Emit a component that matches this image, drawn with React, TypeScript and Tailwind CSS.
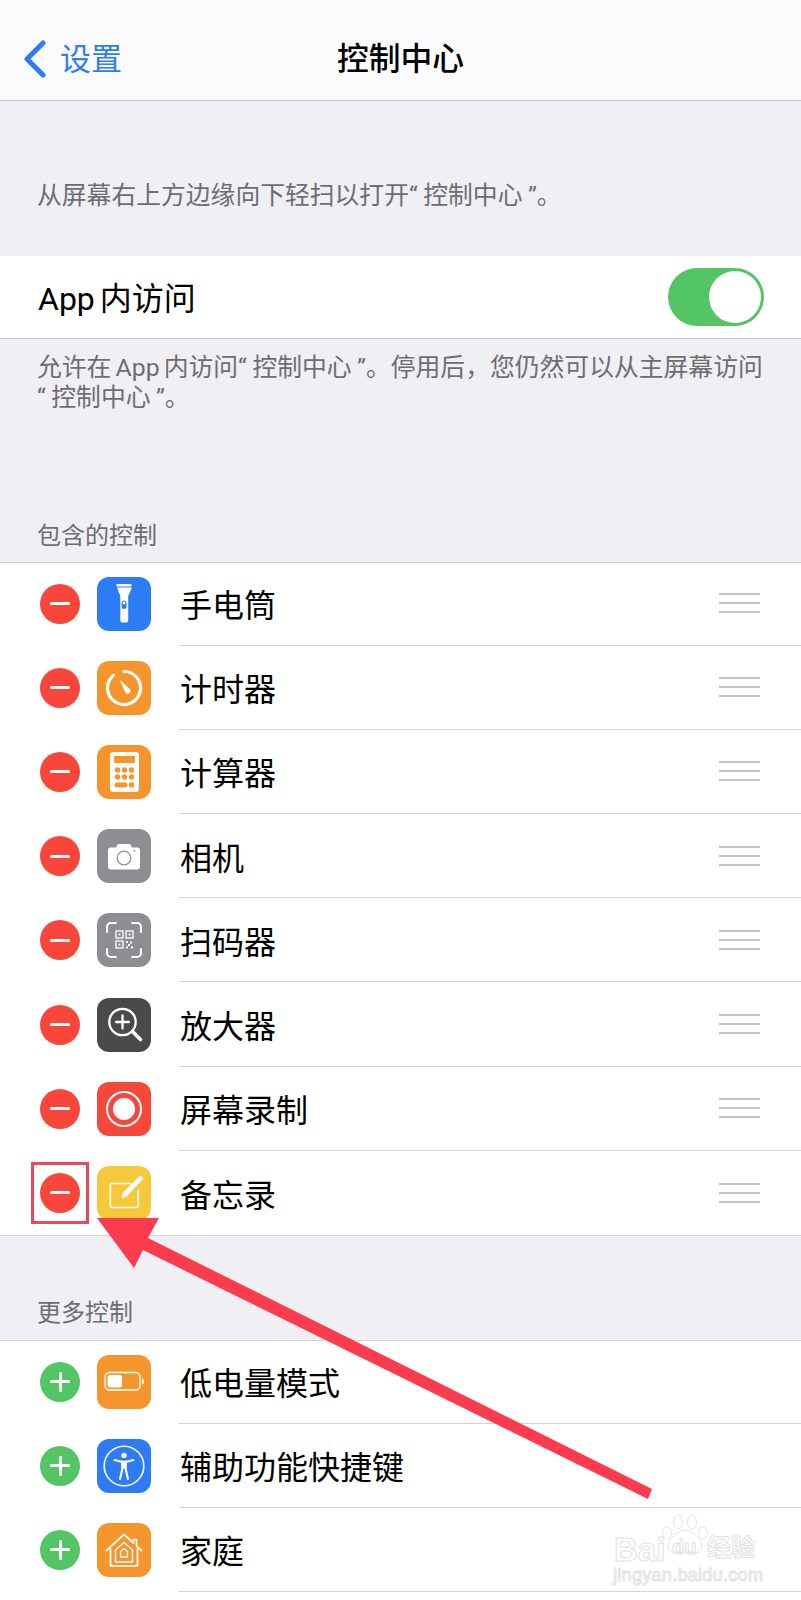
import type { ReactNode } from "react";

const orange = "#f6952b";
const blue = "#2e7bf6";
const grey = "#8e8e92";

function Glyph({ bg, children }: { bg: string; children: ReactNode }) {
  return (
    <svg viewBox="0 0 54 54" className="h-[54px] w-[54px] shrink-0">
      <rect width="54" height="54" rx="12" fill={bg} />
      {children}
    </svg>
  );
}

const FlashlightIcon = () => (
  <Glyph bg={blue}>
    <rect x="19.5" y="7" width="15" height="2.4" rx="0.6" fill="#fff" />
    <path d="M20 10.5h14.4v1.6l-3.2 7V43.5a2 2 0 0 1-2 2h-3.9a2 2 0 0 1-2-2V19z" fill="#fff" />
    <rect x="24.6" y="23.5" width="5" height="8.5" rx="2.5" fill={blue} />
    <circle cx="27.1" cy="26" r="1.4" fill="#fff" />
  </Glyph>
);

const TimerIcon = () => (
  <Glyph bg={orange}>
    <path d="M27 10.5a16.5 16.5 0 1 1-10.5 3.8" fill="none" stroke="#fff" strokeWidth="3.2" strokeLinecap="round" />
    <path d="M22.5 18.5l9.600 9a2.800 2.800 0 1 1-4 3.400z" fill="#fff" />
  </Glyph>
);

const CalculatorIcon = () => (
  <Glyph bg={orange}>
    <rect x="13" y="7" width="29" height="40" rx="3.5" fill="#fff" />
    <rect x="17" y="11" width="21" height="7" rx="1" fill={orange} />
    {[20.5, 27.5, 34.5].flatMap((x) =>
      [25, 32].map((y) => <circle key={`${x}-${y}`} cx={x} cy={y} r="2.7" fill={orange} />),
    )}
    <rect x="17.5" y="37.5" width="13" height="5" rx="2.5" fill={orange} />
    <circle cx="34.5" cy="40" r="2.7" fill={orange} />
  </Glyph>
);

const CameraIcon = () => (
  <Glyph bg={grey}>
    <path d="M14 18.5h5l1.8-3.5h12.4l1.8 3.5h5a3 3 0 0 1 3 3v16a3 3 0 0 1-3 3H14a3 3 0 0 1-3-3v-16a3 3 0 0 1 3-3z" fill="#fff" />
    <circle cx="27" cy="29" r="6.8" fill="none" stroke={grey} strokeWidth="1.2" />
    <circle cx="37.5" cy="21.8" r="0.9" fill={grey} />
  </Glyph>
);

const QrIcon = () => (
  <Glyph bg={grey}>
    <path
      d="M10 19v-5a4 4 0 0 1 4-4h5M35 10h5a4 4 0 0 1 4 4v5M44 36v4a4 4 0 0 1-4 4h-5M19 44h-5a4 4 0 0 1-4-4v-4"
      fill="none"
      stroke="#fff"
      strokeWidth="2"
      strokeLinecap="round"
    />
    <g fill="none" stroke="#fff" strokeWidth="1.3">
      <rect x="19" y="18" width="7" height="7" />
      <rect x="29" y="18" width="7" height="7" />
      <rect x="19" y="28" width="7" height="7" />
    </g>
    <g fill="#fff">
      <rect x="21.6" y="20.6" width="1.8" height="1.8" />
      <rect x="31.6" y="20.6" width="1.8" height="1.8" />
      <rect x="21.6" y="30.6" width="1.8" height="1.8" />
      <rect x="29" y="28" width="2" height="2" />
      <rect x="33" y="28.6" width="2" height="2" />
      <rect x="31" y="31" width="2" height="2" />
      <rect x="29" y="33.4" width="2" height="2" />
      <rect x="34" y="33.4" width="2" height="2" />
    </g>
  </Glyph>
);

const MagnifierIcon = () => (
  <Glyph bg="#4a4a4c">
    <circle cx="25.5" cy="24" r="13.2" fill="none" stroke="#fff" strokeWidth="2.3" />
    <path d="M25.5 17.5v13M19 24h13" stroke="#fff" strokeWidth="2.3" strokeLinecap="round" />
    <path d="M35.5 33.5l8 8" stroke="#fff" strokeWidth="3.6" strokeLinecap="round" />
  </Glyph>
);

const RecordIcon = () => (
  <Glyph bg="#f6483a">
    <circle cx="27" cy="27" r="17" fill="none" stroke="#fff" strokeWidth="2" />
    <circle cx="27" cy="27" r="11" fill="#fff" />
  </Glyph>
);

const NotesIcon = () => (
  <Glyph bg="#f6c93d">
    <path d="M34 17.500H15a1.700 1.700 0 0 0-1.700 1.700v20.600a1.700 1.700 0 0 0 1.700 1.700h24.500a1.700 1.700 0 0 0 1.700-1.700V24" fill="none" stroke="#fff" strokeWidth="1.500" />
    <path d="M24.500 32.500l1.500-6L42 10.700a2.200 2.200 0 0 1 3.200 0 2.200 2.200 0 0 1 0 3.200L29.500 30.500z" fill="#fff" />
  </Glyph>
);

const BatteryIcon = () => (
  <Glyph bg={orange}>
    <rect x="8" y="17.5" width="35" height="17.5" rx="4.5" fill="none" stroke="#fff" strokeWidth="1.4" />
    <rect x="10.5" y="20" width="14.5" height="12.5" rx="2.5" fill="#fff" />
    <path d="M45 23.5c1.500.5 2 1.500 2 3s-.5 2.500-2 3z" fill="#fff" />
  </Glyph>
);

const AccessibilityIcon = () => (
  <Glyph bg={blue}>
    <circle cx="27" cy="27" r="19.800" fill="none" stroke="#fff" strokeWidth="1.600" />
    <circle cx="27" cy="16.400" r="2.700" fill="#fff" />
    <path d="M17.500 21l7 1.700h5l7-1.700" fill="none" stroke="#fff" strokeWidth="2" strokeLinecap="round" strokeLinejoin="round" />
    <path d="M25 22.500l.3 7.500-2.300 10M29 22.500l-.3 7.500 2.300 10" fill="none" stroke="#fff" strokeWidth="2.100" strokeLinecap="round" strokeLinejoin="round" />
    <rect x="25" y="22.500" width="4" height="7" fill="#fff" />
  </Glyph>
);

const HomeIcon = () => (
  <Glyph bg={orange}>
    <path d="M9.500 27.500L27 11.500l9.500 8.500v-3.500h3v6.500l5 4.500M13.500 26v17h27V26" fill="none" stroke="#fff" strokeWidth="1.700" strokeLinecap="round" strokeLinejoin="round" />
    <path d="M18.500 27L27 19.500l8.500 7.500v12h-17z" fill="none" stroke="#fff" strokeWidth="1.400" strokeLinejoin="round" />
    <path d="M23.500 28.500l3.500-3 3.500 3v5.500h-7z" fill="none" stroke="#fff" strokeWidth="1.300" strokeLinejoin="round" />
  </Glyph>
);

const included = [
  { name: "手电筒", icon: FlashlightIcon },
  { name: "计时器", icon: TimerIcon },
  { name: "计算器", icon: CalculatorIcon },
  { name: "相机", icon: CameraIcon },
  { name: "扫码器", icon: QrIcon },
  { name: "放大器", icon: MagnifierIcon },
  { name: "屏幕录制", icon: RecordIcon },
  { name: "备忘录", icon: NotesIcon },
];

const more = [
  { name: "低电量模式", icon: BatteryIcon },
  { name: "辅助功能快捷键", icon: AccessibilityIcon },
  { name: "家庭", icon: HomeIcon },
];

function ControlRow({ name, icon: Icon, added, last }: { name: string; icon: () => ReactNode; added?: boolean; last?: boolean }) {
  return (
    <div className="flex h-[84.2px] items-center pl-[40px]">
      <div className={`relative h-[40px] w-[40px] shrink-0 rounded-full ${added ? "bg-[#54c564]" : "bg-[#f8473a]"}`}>
        <div className="absolute left-[10px] top-[18.500px] h-[3px] w-[20px] rounded-full bg-white" />
        {added && <div className="absolute left-[18.500px] top-[10px] h-[20px] w-[3px] rounded-full bg-white" />}
      </div>
      <div className="ml-[17px]">
        <Icon />
      </div>
      <div className={`ml-[28px] flex h-full flex-1 items-center justify-between pl-[1px] pr-[41px] ${last ? "" : "border-b border-[#d2d2d6]"}`}>
        <span className="relative top-[3px] text-[32px] leading-none text-black">{name}</span>
        {!added && (
          <div className="flex w-[41px] flex-col gap-[7px]">
            <div className="h-[2px] bg-[#c4c4c8]" />
            <div className="h-[2px] bg-[#c4c4c8]" />
            <div className="h-[2px] bg-[#c4c4c8]" />
          </div>
        )}
      </div>
    </div>
  );
}

// quotes sit wider in the iOS font than in Roboto
function Quoted({ children }: { children: ReactNode }) {
  return (
    <>
      <span className="pr-[5.500px]">“</span>
      {children}
      <span className="pl-[5.500px]">”</span>
    </>
  );
}

function Watermark() {
  const outline = "text-transparent [-webkit-text-stroke:1px_#e2e2e2]";
  return (
    <div className="absolute left-[613px] top-[1514px] h-[70px] w-[146px] font-['Liberation_Sans',sans-serif]">
      <svg viewBox="0 0 60 40" className="absolute left-[46px] top-0 h-[40px] w-[60px]" fill="#fff" stroke="#e2e2e2" strokeWidth="1">
        <ellipse cx="8" cy="19" rx="4.500" ry="6" />
        <ellipse cx="19" cy="8" rx="4.500" ry="7" />
        <ellipse cx="33" cy="8" rx="4.500" ry="7" />
        <ellipse cx="44" cy="19" rx="4.500" ry="6" />
        <path d="M26 16c7 0 17 9 17 16 0 5-4 7-8 7-3 0-5-1-9-1s-6 1-9 1c-4 0-8-2-8-7 0-7 10-16 17-16z" />
      </svg>
      <span className={`absolute left-[1px] top-[19px] text-[33px] font-bold leading-none ${outline}`}>Bai</span>
      <span className={`absolute left-[59px] top-[23px] text-[20px] font-bold leading-none ${outline}`}>du</span>
      <span className={`absolute left-[94px] top-[20px] font-['Noto_Sans_CJK_SC',sans-serif] text-[24px] font-bold leading-none ${outline}`}>经验</span>
      <span className={`absolute left-0 top-[52px] text-[18px] leading-none tracking-[0.3px] ${outline}`}>jingyan.baidu.com</span>
    </div>
  );
}

export default function App() {
  return (
    <div className="relative h-[1600px] w-[801px] overflow-hidden bg-[#efeff4] font-['Roboto','Noto_Sans_CJK_SC',sans-serif]">
      <header className="flex h-[101px] items-center justify-center border-b border-[#c6c6ca] bg-[#fbfbfd]">
        <div className="absolute left-[23px] top-[40px] flex items-center text-[#2f7cf0]">
          <svg viewBox="0 0 24 38" className="h-[38px] w-[24px]" fill="none" stroke="currentColor" strokeWidth="5" strokeLinecap="round" strokeLinejoin="round">
            <path d="M20 3L4 19l16 16" />
          </svg>
          <span className="ml-[13px] text-[31px] leading-none">设置</span>
        </div>
        <h1 className="relative top-[10px] text-[31.800px] font-medium leading-none text-black">控制中心</h1>
      </header>

      <div className="h-[155px] pl-[37px] pt-[80px] text-[24.800px] leading-[30px] text-[#6d6d72]">
        从屏幕右上方边缘向下轻扫以打开<Quoted>控制中心</Quoted>。
      </div>

      <div className="flex h-[83px] items-center justify-between border-b border-[#c9c9cd] bg-white pl-[38px] pr-[37px]">
        <span className="relative top-[2px] text-[32px] leading-none text-black [word-spacing:-3px]">App 内访问</span>
        <div className="flex h-[58px] w-[96px] items-center justify-end rounded-full bg-[#54c564] pr-[3px]">
          <div className="h-[52px] w-[52px] rounded-full bg-white" />
        </div>
      </div>

      <div className="h-[222.5px] pl-[37px] pr-[30px] pt-[14px] text-[24.800px] leading-[30px] text-[#6d6d72]">
        <div className="[word-spacing:-2px]">
          允许在 App 内访问<Quoted>控制中心</Quoted>。停用后，您仍然可以从主屏幕访问
        </div>
        <Quoted>控制中心</Quoted>。
        <div className="mt-[108px] text-[24px] leading-[30px]">包含的控制</div>
      </div>

      <section className="border-b border-[#d4d4d8] bg-white shadow-[inset_0_1px_0_#d4d4d8]">
        {included.map((row, i) => (
          <ControlRow key={row.name} {...row} last={i === included.length - 1} />
        ))}
      </section>

      <div className="h-[103.5px] pl-[37px] pt-[62px] text-[24px] leading-[30px] text-[#6d6d72]">更多控制</div>

      <section className="h-[262px] bg-white shadow-[inset_0_1px_0_#d4d4d8]">
        {more.map((row) => (
          <ControlRow key={row.name} {...row} added />
        ))}
      </section>

      <svg viewBox="0 0 801 1600" className="absolute left-0 top-0 h-[1600px] w-[801px]">
        <rect x="32.500" y="1163.500" width="55" height="59" fill="none" stroke="#e84a5c" strokeWidth="3" />
        <path d="M97 1218H159L148 1238L652 1489L648 1499L143 1250L134 1268Z" fill="#fb3c4e" />
      </svg>

      <Watermark />
    </div>
  );
}
